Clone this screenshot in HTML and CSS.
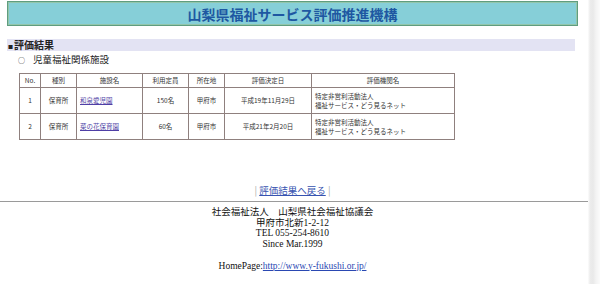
FILE: index.html
```html
<!DOCTYPE html>
<html lang="ja">
<head>
    <meta charset="UTF-8">
    <title>評価結果 - 山梨県福祉サービス評価推進機構</title>
    <link rel="stylesheet" href="styles.css">
</head>
<body>
    <div class="page">
        <div class="main">
            <div class="banner">
                <h1>山梨県福祉サービス評価推進機構</h1>
            </div>

            <h2 class="section-title"><span class="square">■</span>評価結果</h2>
            <p class="category"><span class="bullet">○</span>児童福祉関係施設</p>

            <table class="result-table">
                <colgroup>
                    <col style="width:21px">
                    <col style="width:36px">
                    <col style="width:66px">
                    <col style="width:46px">
                    <col style="width:36px">
                    <col style="width:87px">
                    <col style="width:143px">
                </colgroup>
                <thead>
                    <tr>
                        <th>No.</th>
                        <th>種別</th>
                        <th>施設名</th>
                        <th>利用定員</th>
                        <th>所在地</th>
                        <th>評価決定日</th>
                        <th>評価機関名</th>
                    </tr>
                </thead>
                <tbody>
                    <tr>
                        <td>1</td>
                        <td>保育所</td>
                        <td class="left"><a href="#">和泉愛児園</a></td>
                        <td>150名</td>
                        <td>甲府市</td>
                        <td>平成19年11月29日</td>
                        <td class="left">特定非営利活動法人<br>福祉サービス・どう見るネット</td>
                    </tr>
                    <tr>
                        <td>2</td>
                        <td>保育所</td>
                        <td class="left"><a href="#">菜の花保育園</a></td>
                        <td>60名</td>
                        <td>甲府市</td>
                        <td>平成21年2月20日</td>
                        <td class="left">特定非営利活動法人<br>福祉サービス・どう見るネット</td>
                    </tr>
                </tbody>
            </table>

            <p class="back"><span class="pipe">|</span> <a href="#">評価結果へ戻る</a> <span class="pipe">|</span></p>

            <hr class="rule">

            <address class="footer">
                社会福祉法人　山梨県社会福祉協議会<br>
                甲府市北新1-2-12<br>
                TEL 055-254-8610<br>
                Since Mar.1999<br>
                <br>
                HomePage:<a href="#">http://www.y-fukushi.or.jp/</a>
            </address>
        </div>
        <div class="strip"></div>
    </div>
</body>
</html>
```

FILE: styles.css
```css
/* Reset and base styles */
* {
    margin: 0;
    padding: 0;
    box-sizing: border-box;
}
body {
    font-family: "Liberation Serif", "Noto Sans CJK JP", serif;
    color: #222;
    background-color: #fff;
}
a {
    color: #2f4bb0;
}
.page {
    display: flex;
    width: 600px;
    height: 284px;
    overflow: hidden;
}
.main {
    width: 588px;
    padding: 0 10px 0 7px;
}
.strip {
    width: 12px;
    background: linear-gradient(to right, #fdfdfd 0, #ececec 2px, #e9e9e9 5px, #f3f3f3 8px, #fbfbfb 12px);
}

/* Banner */
.banner {
    margin-top: 1px;
    height: 25px;
    background-color: #86cfd8;
    border: 1px solid #5f9d7f;
    box-shadow: inset 0 0 0 1px #93c6ab;
    display: flex;
    align-items: center;
    justify-content: center;
}
.banner h1 {
    font-family: "Noto Sans CJK JP", sans-serif;
    font-size: 14px;
    font-weight: bold;
    color: #1e58a2;
}

/* Section */
.section-title {
    margin: 13px 3px 0 0;
    height: 12px;
    background-color: #e3e3f3;
    font-family: "Noto Sans CJK JP", sans-serif;
    font-size: 10px;
    line-height: 12px;
    font-weight: bold;
    color: #222;
}
.square {
    font-size: 5px;
    vertical-align: 1px;
    margin: 0 1px 0 1px;
}
.category {
    margin-top: 2px;
    padding-left: 11px;
    font-family: "Noto Sans CJK JP", sans-serif;
    font-size: 9.5px;
    line-height: 12px;
}
.bullet {
    display: inline-block;
    width: 15px;
    font-size: 7px;
}

/* Table */
.result-table {
    margin: 7px 0 0 12px;
    border-collapse: collapse;
    border: 1px solid #7a6b6a;
    table-layout: fixed;
    font-family: "Noto Sans CJK JP", sans-serif;
    font-size: 6.5px;
    color: #333;
}
.result-table th,
.result-table td {
    border: 1px solid #8f807e;
    text-align: center;
    vertical-align: middle;
    font-weight: normal;
    line-height: 9px;
}
.result-table th {
    height: 14px;
}
.result-table td {
    height: 26px;
}
.result-table td.left {
    text-align: left;
    padding-left: 3px;
}
.result-table a {
    color: #4f3fa6;
}

/* Back link */
.back {
    margin-top: 45px;
    text-align: center;
    font-family: "Noto Sans CJK JP", sans-serif;
    font-size: 9.5px;
    line-height: 11px;
}
.back a {
    color: #3653b0;
}
.pipe {
    color: #aaa;
}
.rule {
    margin: 5px -10px 0 -7px;
    border: none;
    border-top: 1px solid #9a9a9a;
}

/* Footer */
.footer {
    margin-top: 5px;
    font-style: normal;
    text-align: center;
    font-size: 9.5px;
    line-height: 10.7px;
    color: #111;
}
.footer a {
    color: #2a48b2;
}
```
